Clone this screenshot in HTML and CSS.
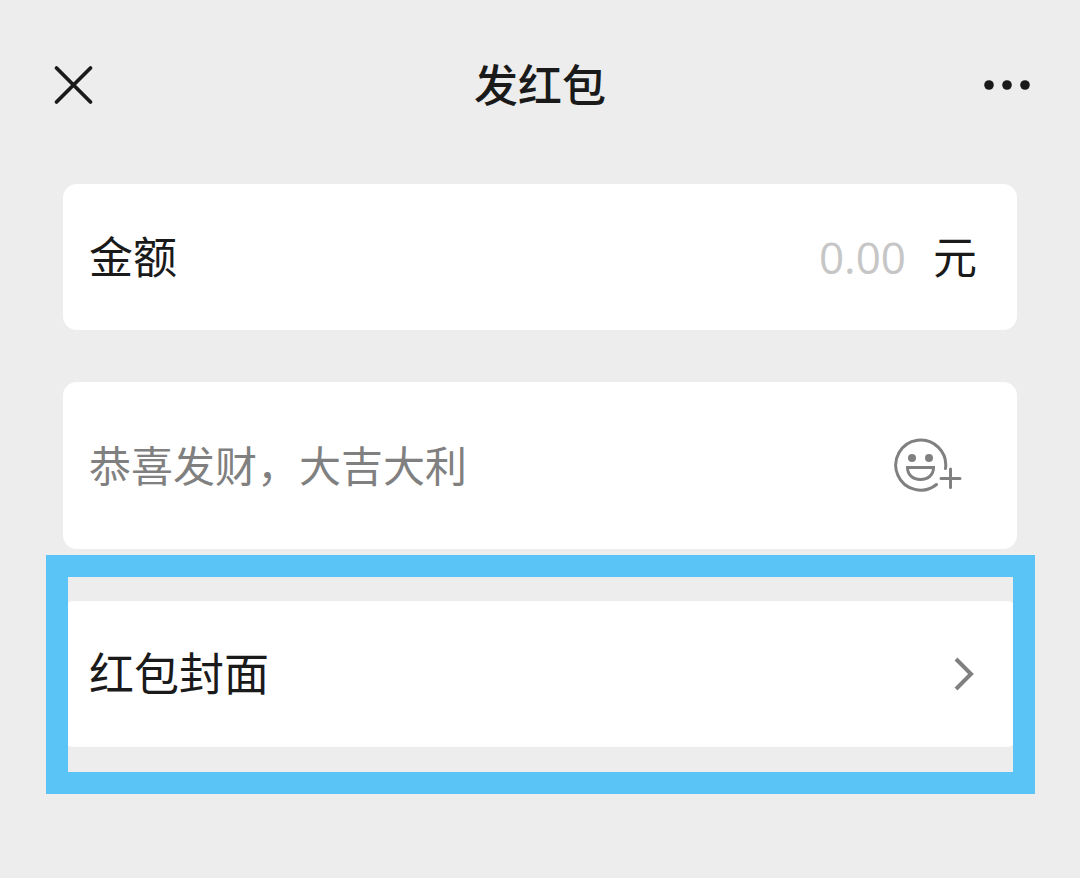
FILE: index.html
```html
<!DOCTYPE html>
<html lang="zh-CN">

<head>
	<meta charset="UTF-8">
	<meta name="viewport" content="width=device-width, initial-scale=1.0">
	<title>发红包</title>
	<link rel="stylesheet" href="styles.css">
</head>

<body>
	<header class="header">
		<button type="button" class="icon-button" aria-label="关闭">
			<svg class="icon" width="48" height="48" viewBox="0 0 48 48" stroke-width="3.800">
				<path d="M7.500 7l34 34M41.500 7l-34 34" />
			</svg>
		</button>
		<h1 class="title">发红包</h1>
		<button type="button" class="icon-button" aria-label="更多">
			<svg width="48" height="48" viewBox="0 0 48 48" fill="currentColor">
				<circle cx="6" cy="24" r="4.800" />
				<circle cx="24" cy="24" r="4.800" />
				<circle cx="42" cy="24" r="4.800" />
			</svg>
		</button>
	</header>
	<main class="form">
		<div class="card">
			<label class="label" for="amount">金额</label>
			<input class="amount" id="amount" type="text" inputmode="decimal" placeholder="0.00">
			<span class="unit">元</span>
		</div>
		<div class="card card-message">
			<input class="message" type="text" placeholder="恭喜发财，大吉大利" aria-label="祝福语">
			<button type="button" class="icon-button emoji" aria-label="添加表情">
				<svg class="icon" width="72" height="60" viewBox="0 0 72 60" stroke-width="3">
					<path d="M53.500 32.500A25 25 0 1 0 44.500 48.500" />
					<path d="M15.500 31.500h26c0 7-5 12-13 12s-13-5-13-12z" />
					<path d="M58.500 33v18.500M49 42.500h19" />
					<circle cx="20" cy="22" r="4" fill="currentColor" stroke="none" />
					<circle cx="37" cy="22" r="4" fill="currentColor" stroke="none" />
				</svg>
			</button>
		</div>
		<a class="card card-cover" href="#cover">
			<span class="label">红包封面</span>
			<svg class="icon arrow" width="24" height="40" viewBox="0 0 24 40" stroke-width="4">
				<path d="M3 5l15 15L3 35" stroke-linecap="butt" />
			</svg>
		</a>
	</main>
</body>

</html>
```
FILE: styles.css
```css
*,
*::before,
*::after {
	box-sizing: border-box;
}

body {
	font-family: "Noto Sans CJK SC", sans-serif;
	font-size: 44px;
	line-height: 60px;
	background-color: #ededed;
	color: #1a1a1a;
	min-height: 100vh;
	margin: 0;
}

button,
input {
	font: inherit;
	color: inherit;
	background: none;
	border: 0;
	padding: 0;
	outline: none;
}

.header {
	display: flex;
	align-items: center;
	justify-content: space-between;
	padding: 53px 49px 67px;
}

.title {
	font-size: 44px;
	font-weight: 500;
	margin: 0;
}

.title,
.label,
.unit,
.message {
	padding-bottom: 4px;
}

.icon-button {
	display: flex;
	cursor: pointer;
}

.icon {
	fill: none;
	stroke: currentColor;
	stroke-linecap: round;
}

.form {
	display: grid;
	gap: 52px;
	padding: 0 63px;
}

.card {
	position: relative;
	display: flex;
	align-items: center;
	min-height: 146px;
	padding: 0 40px 0 26px;
	border-radius: 14px;
	background-color: #ffffff;
	color: inherit;
	text-decoration: none;
}

.card-message {
	min-height: 167px;
	padding-right: 53px;
}

.label {
	flex: none;
}

.amount,
.message {
	flex: 1;
	min-width: 0;
}

.amount {
	font-family: "Open Sans", sans-serif;
	text-align: right;
	margin-right: 27px;
}

.amount::placeholder {
	color: #c6c6c6;
	opacity: 1;
}

.message {
	font-size: 42px;
}

.message::placeholder {
	color: #808080;
	opacity: 1;
}

.emoji,
.arrow {
	color: #808080;
}

.arrow {
	margin-left: auto;
}

.card-cover {
	border-radius: 10px;
	font-size: 45px;
}

/* highlight frame around the cover row */
.card-cover::after {
	content: '';
	position: absolute;
	inset: -46px -18px -47px -17px;
	border: 22px solid #5ac4f6;
	pointer-events: none;
}
```
